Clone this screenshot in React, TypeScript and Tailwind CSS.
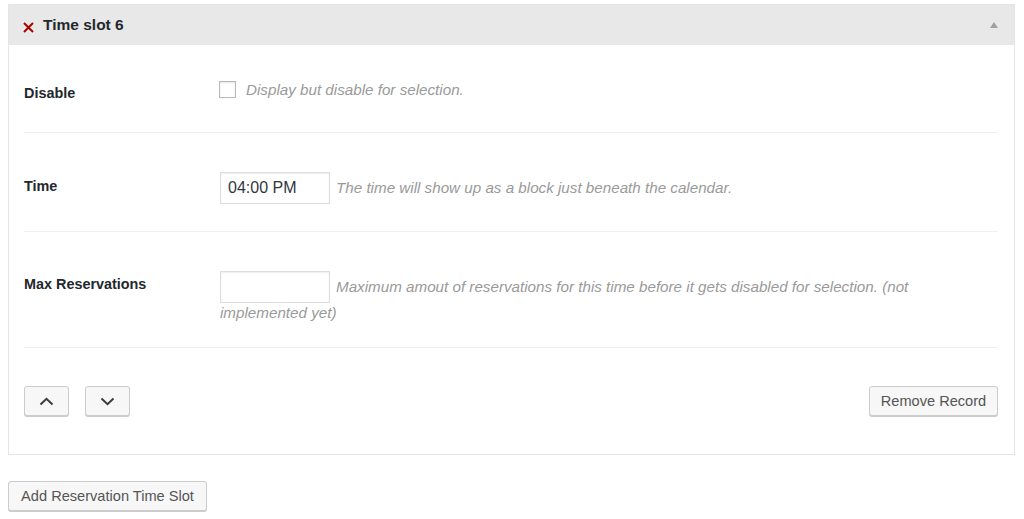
import React from "react";

const font = { fontFamily: '"Liberation Sans", Arial, sans-serif' };

function Chevron({ up }: { up?: boolean }) {
  return (
    <svg width="15" height="9" viewBox="0 0 15 9" className="mx-auto">
      <path
        d={up ? "M1.5 7.5 L7.5 1.8 L13.5 7.5" : "M1.5 1.5 L7.5 7.2 L13.5 1.5"}
        fill="none"
        stroke="#3c3c3c"
        strokeWidth="2"
      />
    </svg>
  );
}

const btn =
  "bg-[#f7f7f7] border border-[#cccccc] rounded-[3px] shadow-[0_1px_0_#cccccc] text-[#555555] text-[14.6px] leading-none";

const label = "w-[196px] shrink-0 leading-[20px] text-[14.4px] font-bold text-[#23282d]";
const desc = "text-[15.2px] italic text-[#9a9a9a]";

export default function App() {
  return (
    <div className="bg-white min-h-[519px] pt-[4px] pl-[8px]" style={font}>
      {/* Time slot panel */}
      <div className="w-[1007px] border border-[#e5e5e5] bg-white">
        <div className="h-[40px] bg-[#e8e8e8] flex items-center pl-[14px] pr-[16px]">
          <svg width="11" height="11" viewBox="0 0 11 11" className="mt-[5px]">
            <path d="M1 1 L10 10 M10 1 L1 10" stroke="#aa0000" strokeWidth="2" />
          </svg>
          <span className="ml-[9px] text-[15.5px] font-bold text-[#23282d]">Time slot 6</span>
          <svg width="8" height="6" viewBox="0 0 8 6" className="ml-auto">
            <path d="M4 0 L8 6 L0 6 Z" fill="#a0a0a0" />
          </svg>
        </div>

        <div className="pl-[15px] pr-[16px]">
          {/* Disable */}
          <div className="flex border-b border-[#eeeeee]">
            <div className={`${label} pt-[38px]`}>Disable</div>
            <div className="flex-1 pt-[36px] pb-[34px]">
              <div className="h-[17px] flex items-center">
                <span className="w-[17px] h-[17px] shrink-0 border border-[#b4b9be] bg-white shadow-[inset_0_1px_2px_rgba(0,0,0,0.1)] -ml-[1px]" />
                <span className={`ml-[10px] leading-[17px] ${desc}`}>
                  Display but disable for selection.
                </span>
              </div>
            </div>
          </div>

          {/* Time */}
          <div className="flex border-b border-[#eeeeee]">
            <div className={`${label} pt-[43px]`}>Time</div>
            <div className="flex-1 pt-[39px] pb-[27px] flex items-center">
              <input
                defaultValue="04:00 PM"
                className="w-[110px] h-[32px] border border-[#dddddd] shadow-[inset_0_1px_2px_rgba(0,0,0,0.07)] px-[7px] text-[16px] text-[#32373c] outline-none"
                style={font}
              />
              <span className={`ml-[6px] ${desc}`}>
                The time will show up as a block just beneath the calendar.
              </span>
            </div>
          </div>

          {/* Max Reservations */}
          <div className="flex border-b border-[#eeeeee]">
            <div className={`${label} pt-[42px]`}>Max Reservations</div>
            <div className="flex-1 pt-[39px] pb-[24px]">
              <div className="flex items-center h-[32px]">
                <input
                  className="w-[110px] h-[32px] border border-[#dddddd] shadow-[inset_0_1px_2px_rgba(0,0,0,0.07)] px-[7px] text-[16px] outline-none"
                  style={font}
                />
                <span className={`ml-[6px] whitespace-nowrap ${desc}`}>
                  Maximum amout of reservations for this time before it gets disabled for selection. (not
                </span>
              </div>
              <div className={`leading-[20px] ${desc}`}>implemented yet)</div>
            </div>
          </div>

          {/* Actions */}
          <div className="flex items-center pt-[38px] pb-[38px]">
            <button className={`${btn} w-[45px] h-[30px]`}>
              <Chevron up />
            </button>
            <button className={`${btn} w-[45px] h-[30px] ml-[16px]`}>
              <Chevron />
            </button>
            <button className={`${btn} w-[129px] h-[30px] ml-auto`} style={font}>
              Remove Record
            </button>
          </div>
        </div>
      </div>

      <button className={`${btn} mt-[26px] w-[199px] h-[30px]`} style={font}>
        Add Reservation Time Slot
      </button>
    </div>
  );
}
